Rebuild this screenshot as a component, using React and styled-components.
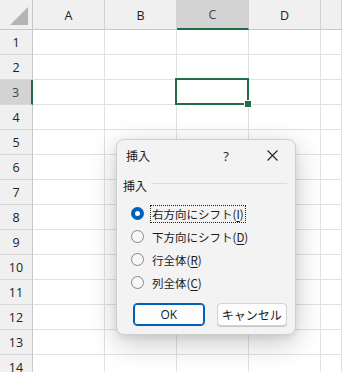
import React from 'react'
import styled, { createGlobalStyle } from 'styled-components'

const Global = createGlobalStyle`
    html, body {
        margin: 0;
        padding: 0;
        background: #ffffff;
        overflow: hidden;
    }
    body {
        font-family: "Noto Sans CJK JP", "Open Sans", sans-serif;
    }
`

const Page = styled.div`
    position: relative;
    width: 342px;
    height: 372px;
    overflow: hidden;
`
const Sheet = styled.div`
    display: grid;
    grid-template-columns: 33px repeat(4, 72px) 1fr;
    grid-template-rows: 30px repeat(14, 25px);
    width: 342px;
`
const Corner = styled.div`
    background: #f0f0f0;
    border-right: 1px solid #c8c8c8;
    border-bottom: 1px solid #c8c8c8;
    display: flex;
    align-items: flex-end;
    justify-content: flex-end;
    padding: 0 4px 4px 0;
    box-sizing: border-box;
`
const Triangle = styled.div`
    width: 0;
    height: 0;
    border-left: 18px solid transparent;
    border-bottom: 18px solid #b4b4b4;
`
const ColHead = styled.div`
    background: ${p => (p.$active ? '#d3d3d3' : '#f0f0f0')};
    border-right: 1px solid #d2d2d2;
    border-bottom: ${p => (p.$active ? '2px solid #1e6e46' : '1px solid #c8c8c8')};
    box-sizing: border-box;
    display: flex;
    align-items: center;
    justify-content: center;
    padding-top: 1px;
    font-family: "Open Sans", "Liberation Sans", sans-serif;
    font-size: 12.5px;
    color: ${p => (p.$active ? '#444' : '#222')};
`
const RowHead = styled.div`
    background: ${p => (p.$active ? '#d3d3d3' : '#f0f0f0')};
    border-right: ${p => (p.$active ? '2px solid #1e6e46' : '1px solid #c8c8c8')};
    border-bottom: 1px solid #d8d8d8;
    box-sizing: border-box;
    display: flex;
    align-items: center;
    justify-content: center;
    font-family: "Open Sans", "Liberation Sans", sans-serif;
    font-size: 12.5px;
    color: ${p => (p.$active ? '#444' : '#222')};
`
const Cell = styled.div`
    position: relative;
    border-right: 1px solid #e1e1e1;
    border-bottom: 1px solid #e1e1e1;
    box-sizing: border-box;
    background: #ffffff;

    ${p => p.$selected && `
        &::before {
            content: '';
            position: absolute;
            left: -2px;
            top: -2px;
            right: -1px;
            bottom: -1px;
            border: 2px solid #1e6e46;
            z-index: 1;
        }
        &::after {
            content: '';
            position: absolute;
            right: -4px;
            bottom: -4px;
            width: 6px;
            height: 6px;
            background: #1e6e46;
            border: 1px solid #ffffff;
            z-index: 2;
        }
    `}
`

const Dialog = styled.div`
    position: absolute;
    left: 116px;
    top: 139px;
    width: 180px;
    height: 196px;
    box-sizing: border-box;
    background: #f3f3f3;
    border: 1px solid #cfcfcf;
    border-radius: 8px;
    box-shadow: 0 8px 28px rgba(0, 0, 0, 0.22), 0 2px 6px rgba(0, 0, 0, 0.08);
    display: flex;
    flex-direction: column;
    z-index: 10;
    font-size: 11.5px;
    color: #1a1a1a;
`
const TitleBar = styled.div`
    height: 31px;
    display: flex;
    align-items: center;
    padding-left: 9px;
`
const Title = styled.div`
    flex: 1;
    font-size: 12px;
`
const TitleButton = styled.div`
    width: 46px;
    height: 31px;
    display: flex;
    align-items: center;
    justify-content: center;
    font-family: "Open Sans", sans-serif;
    font-size: 13px;
    color: #222;
`
const Body = styled.div`
    padding: 6px 8px 0 6px;
    display: flex;
    flex-direction: column;
`
const GroupHead = styled.div`
    display: flex;
    align-items: center;
    gap: 4px;
    height: 17px;
    font-size: 12px;
`
const GroupLine = styled.div`
    flex: 1;
    height: 1px;
    background: #dcdcdc;
    margin-top: -4px;
`
const Options = styled.div`
    display: flex;
    flex-direction: column;
    margin-top: 8px;
    padding-left: 8px;
`
const Option = styled.div`
    height: 23px;
    display: flex;
    align-items: center;
    gap: 6px;
`
const Radio = styled.div`
    width: 13px;
    height: 13px;
    border-radius: 50%;
    box-sizing: border-box;
    flex-shrink: 0;
    ${p => (p.$checked
        ? `background: #005fb8; border: none; display: flex; align-items: center; justify-content: center;
           &::after { content: ''; width: 5px; height: 5px; border-radius: 50%; background: #ffffff; }`
        : `background: #f7f7f7; border: 1px solid #858585;`)}
`
const OptionLabel = styled.span`
    padding: 0 1px;
    line-height: 16px;
    border: 1px ${p => (p.$focus ? 'dotted #222' : 'solid transparent')};
    white-space: nowrap;
`
const Key = styled.u`
    text-underline-offset: 2px;
`
const Buttons = styled.div`
    display: flex;
    gap: 12px;
    margin-top: 9px;
    padding-left: 10px;
`
const Button = styled.div`
    width: ${p => p.$w}px;
    height: 23px;
    box-sizing: border-box;
    border-radius: 4px;
    background: #fdfdfd;
    border: 1px solid ${p => (p.$primary ? '#005fb8' : '#d3d3d3')};
    box-shadow: ${p => (p.$primary ? 'inset 0 0 0 1px #005fb8' : '0 1px 0 #c4c4c4')};
    display: flex;
    align-items: center;
    justify-content: center;
    font-size: 12px;
    font-family: "Open Sans", "Noto Sans CJK JP", sans-serif;
    color: #1a1a1a;
`

const columns = ['A', 'B', 'C', 'D', '']
const rows = Array.from({ length: 14 }, (_, i) => i + 1)

const options = [
    { text: '右方向にシフト', key: 'I', checked: true },
    { text: '下方向にシフト', key: 'D' },
    { text: '行全体', key: 'R' },
    { text: '列全体', key: 'C' },
]

function App() {
    return (
        <Page>
            <Global />
            <Sheet>
                <Corner><Triangle /></Corner>
                {columns.map((c, i) => (
                    <ColHead key={'h' + i} $active={c === 'C'}>{c}</ColHead>
                ))}
                {rows.map(r => (
                    <React.Fragment key={r}>
                        <RowHead $active={r === 3}>{r}</RowHead>
                        {columns.map((c, i) => (
                            <Cell key={i} $selected={r === 3 && c === 'C'} />
                        ))}
                    </React.Fragment>
                ))}
            </Sheet>

            <Dialog>
                <TitleBar>
                    <Title>挿入</Title>
                    <TitleButton>?</TitleButton>
                    <TitleButton>
                        <svg width="11" height="11" viewBox="0 0 11 11">
                            <path d="M0.5 0.5 L10.5 10.5 M10.5 0.5 L0.5 10.5" stroke="#222" strokeWidth="1.1" />
                        </svg>
                    </TitleButton>
                </TitleBar>
                <Body>
                    <GroupHead>
                        挿入
                        <GroupLine />
                    </GroupHead>
                    <Options>
                        {options.map((o, i) => (
                            <Option key={o.key}>
                                <Radio $checked={o.checked} />
                                <OptionLabel $focus={i === 0}>
                                    {o.text}(<Key>{o.key}</Key>)
                                </OptionLabel>
                            </Option>
                        ))}
                    </Options>
                    <Buttons>
                        <Button $primary $w={72}>OK</Button>
                        <Button $w={71}>キャンセル</Button>
                    </Buttons>
                </Body>
            </Dialog>
        </Page>
    )
}
export default App
